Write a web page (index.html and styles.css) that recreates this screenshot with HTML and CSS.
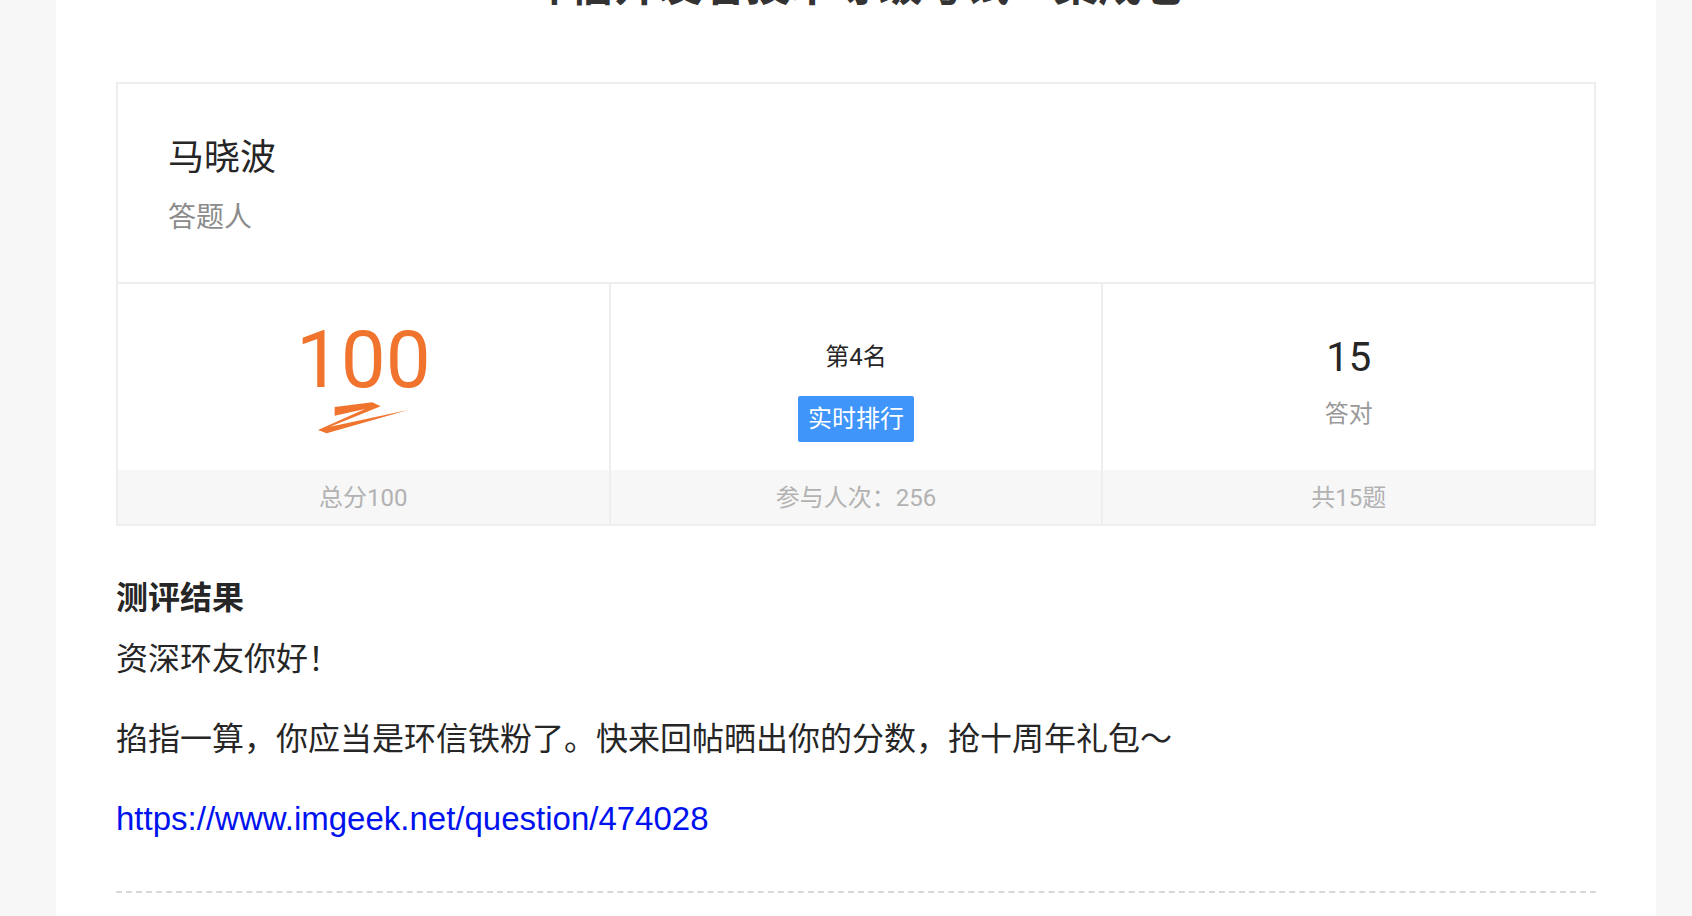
FILE: index.html
```html
<!DOCTYPE html>
<html lang="zh-CN">
<head>
  <meta charset="UTF-8">
  <meta name="viewport" content="width=device-width, initial-scale=1">
  <title>测评结果</title>
  <link rel="stylesheet" href="styles.css">
</head>
<body>

  <main class="page">
    <h1 class="title">环信开发者技术等级考试—集成卷</h1>

    <section class="card">
      <div class="user">
        <p class="user-name">马晓波</p>
        <p class="user-role">答题人</p>
      </div>

      <div class="stats">
        <div class="stat">
          <div class="stat-body stat-score">
            <span class="score">100</span>
            <svg class="underline" viewBox="0 0 270 99" aria-hidden="true">
              <path d="M50 18L163 4L188 16L36 77L270 27L26 97L0 87L141 24L50 44Z"/>
            </svg>
          </div>
          <div class="stat-foot">总分100</div>
        </div>
        <div class="stat">
          <div class="stat-body">
            <span class="rank">第4名</span>
            <button class="btn-rank" type="button">实时排行</button>
          </div>
          <div class="stat-foot">参与人次：256</div>
        </div>
        <div class="stat">
          <div class="stat-body">
            <span class="count">15</span>
            <span class="label">答对</span>
          </div>
          <div class="stat-foot">共15题</div>
        </div>
      </div>
    </section>

    <section class="result">
      <h2>测评结果</h2>
      <p>资深环友你好！</p>
      <p>掐指一算，你应当是环信铁粉了。快来回帖晒出你的分数，抢十周年礼包～</p>
      <p><a href="https://www.imgeek.net/question/474028">https://www.imgeek.net/question/474028</a></p>
    </section>
  </main>

</body>
</html>
```

FILE: styles.css
```css
* {
  box-sizing: border-box;
}

body {
  margin: 0;
  background: #f7f7f7;
  color: #262626;
  font-family: "Liberation Sans", "Noto Sans CJK SC", sans-serif;
}

h1, h2, p {
  margin: 0;
}

.page {
  display: flex;
  flex-direction: column;
  min-height: 100vh;
  margin: 0 36px 0 56px;
  padding: 0 60px;
  background: #fff;
}

.title {
  margin: -44px 0 66px;
  font-size: 44px;
  line-height: 60px;
  text-align: center;
  color: #333;
}

.card {
  border: 2px solid #eee;
}

.user {
  padding: 50px 50px 44px;
  border-bottom: 2px solid #eee;
}

.user-name {
  font-size: 36px;
  line-height: 48px;
}

.user-role {
  margin-top: 16px;
  font-size: 28px;
  line-height: 40px;
  color: #8c8c8c;
}

.stats {
  display: grid;
  grid-template-columns: repeat(3, 1fr);
  gap: 2px;
  background: #eee;
  font-family: Roboto, "Noto Sans CJK SC", sans-serif;
  font-size: 24px;
  line-height: 32px;
}

.stat-body {
  display: flex;
  flex-direction: column;
  align-items: center;
  gap: 24px;
  min-height: 186px;
  padding-top: 58px;
  background: #fff;
}

.stat-score {
  gap: 1px;
  padding-top: 36px;
}

.score {
  font-size: 80px;
  line-height: 80px;
  color: #f0742d;
}

.underline {
  width: 90px;
  height: 33px;
  fill: #f0742d;
}

.rank {
  line-height: 30px;
}

.btn-rank {
  padding: 1px 10px 0;
  border: none;
  border-radius: 2px;
  background: #4095fa;
  color: #fff;
  font: inherit;
  line-height: 45px;
  cursor: pointer;
}

.count {
  font-size: 40px;
}

.label {
  color: #999;
}

.stat-foot {
  padding-top: 2px;
  background: #f7f7f7;
  color: #b2b2b2;
  line-height: 52px;
  text-align: center;
}

.result {
  margin-top: 48px;
  padding-bottom: 48px;
  border-bottom: 2px dashed #d8d8d8;
  font-size: 32px;
  line-height: 48px;
}

.result h2 {
  margin-bottom: 13px;
  font-size: 32px;
}

.result p + p {
  margin-top: 32px;
}

.result a {
  color: #0012ee;
  font-size: 33px;
  text-decoration: none;
}
```
